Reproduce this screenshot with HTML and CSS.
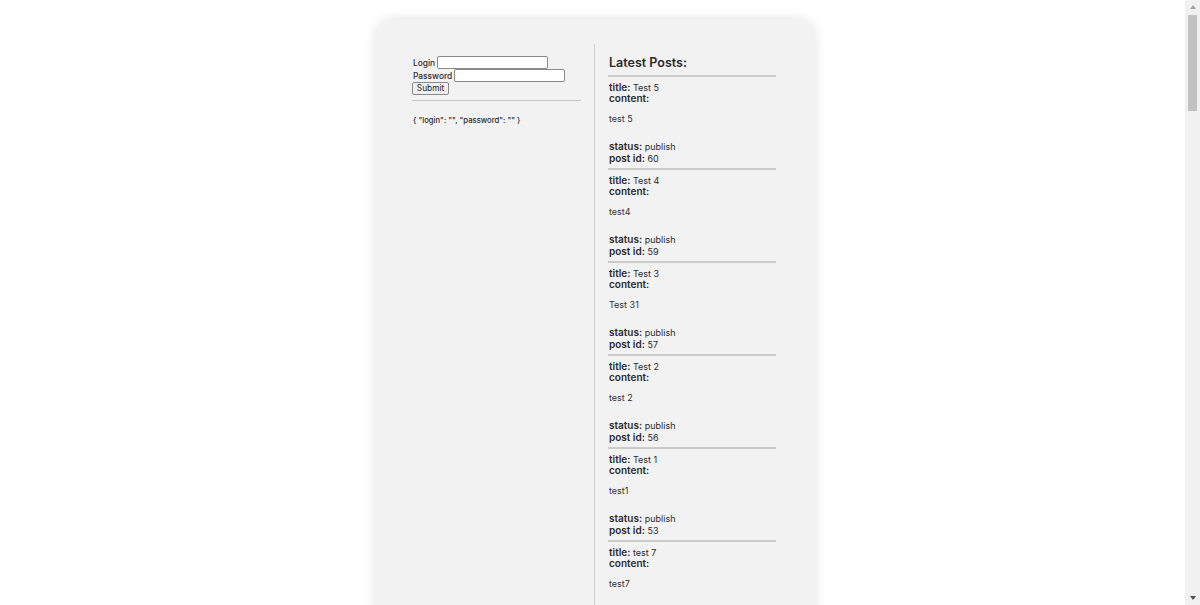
FILE: index.html
```html
<!DOCTYPE html>
<html lang="en">
<head>
    <meta charset="UTF-8">
    <meta name="viewport" content="width=device-width, initial-scale=1.0">
    <title>WP Posts</title>
    <link rel="stylesheet" href="styles.css">
</head>
<body>
    <div class="app-container">
        <div class="login-column">
            <form class="login-form">
                <div class="form-row">
                    <label for="login">Login</label>
                    <input type="text" id="login" name="login" class="login-input">
                </div>
                <div class="form-row">
                    <label for="password">Password</label>
                    <input type="password" id="password" name="password" class="login-input">
                </div>
                <button type="submit">Submit</button>
            </form>
            <hr class="divider">
            <p class="state-dump">{ "login": "", "password": "" }</p>
        </div>

        <div class="posts-column">
            <h2>Latest Posts:</h2>

            <div class="post">
                <div><b>title:</b> Test 5</div>
                <div><b>content:</b></div>
                <p class="post-content">test 5</p>
                <div><b>status:</b> publish</div>
                <div><b>post id:</b> 60</div>
            </div>
            <div class="post">
                <div><b>title:</b> Test 4</div>
                <div><b>content:</b></div>
                <p class="post-content">test4</p>
                <div><b>status:</b> publish</div>
                <div><b>post id:</b> 59</div>
            </div>
            <div class="post">
                <div><b>title:</b> Test 3</div>
                <div><b>content:</b></div>
                <p class="post-content">Test 31</p>
                <div><b>status:</b> publish</div>
                <div><b>post id:</b> 57</div>
            </div>
            <div class="post">
                <div><b>title:</b> Test 2</div>
                <div><b>content:</b></div>
                <p class="post-content">test 2</p>
                <div><b>status:</b> publish</div>
                <div><b>post id:</b> 56</div>
            </div>
            <div class="post">
                <div><b>title:</b> Test 1</div>
                <div><b>content:</b></div>
                <p class="post-content">test1</p>
                <div><b>status:</b> publish</div>
                <div><b>post id:</b> 53</div>
            </div>
            <div class="post">
                <div><b>title:</b> test 7</div>
                <div><b>content:</b></div>
                <p class="post-content">test7</p>
                <div><b>status:</b> publish</div>
                <div><b>post id:</b> 52</div>
            </div>
        </div>
    </div>

    <!-- window scrollbar, drawn over the page -->
    <div class="scrollbar">
        <span class="scroll-arrow up"></span>
        <span class="scroll-thumb"></span>
        <span class="scroll-arrow down"></span>
    </div>
</body>
</html>
```

FILE: styles.css
```css
body {
    font-family: 'Inter', 'Liberation Sans', sans-serif;
    background-color: #ffffff;
    color: #2a2a2a;
    margin: 0;
    padding-top: 19px;
    padding-right: 10px;
}

.app-container {
    width: 440px;
    margin: 0 auto;
    background-color: #f2f2f2;
    border-radius: 20px;
    box-shadow: 0 0 12px rgba(0, 0, 0, 0.12);
    padding: 25px 39px 40px 37px;
    box-sizing: border-box;
    display: grid;
    grid-template-columns: 182px 1fr;
}

/* left side - login form */
.login-column {
    padding: 12px 13px 0 0;
}

.login-form {
    font-size: 8.4px;
    font-weight: 500;
}

.form-row {
    display: flex;
    align-items: center;
    gap: 2px;
    height: 13px;
}

.form-row label {
    padding-left: 1px;
}

.login-input {
    width: 111px;
    height: 13px;
    padding: 0;
    border: 1px solid #8a8a8a;
    border-radius: 2px;
    background-color: #ffffff;
    box-sizing: border-box;
}

.login-form button[type="submit"] {
    margin-top: 0;
    width: 37px;
    height: 13px;
    padding: 0;
    font-family: 'Inter', 'Liberation Sans', sans-serif;
    font-size: 8.3px;
    color: #222;
    background-color: #efefef;
    border: 1px solid #8a8a8a;
    border-radius: 2px;
    line-height: 11px;
}

.divider {
    margin: 5px 0 0 0;
    border: none;
    border-top: 1px solid #c4c4c4;
}

.state-dump {
    margin: 15px 0 0 1px;
    font-size: 7.7px;
    font-weight: 500;
}

/* right side - posts */
.posts-column {
    border-left: 1px solid #cfcfcf;
    padding-left: 13px;
    padding-top: 12px;
    min-height: 560px;
}

.posts-column h2 {
    margin: 0;
    padding: 0 0 5px 1px;
    font-size: 12.5px;
    font-weight: 600;
    line-height: 14px;
    border-bottom: 2px solid #cbcbcb;
}

.post {
    font-size: 9px;
    line-height: 11.5px;
    padding: 4.5px 1px 4px 1px;
    border-bottom: 2px solid #cbcbcb;
}

.post b {
    font-size: 10px;
    font-weight: 600;
    line-height: 1;
}

.post-content {
    margin: 8.5px 0 16.5px 0;
    color: #333;
}

/* fake window scrollbar */
.scrollbar {
    position: fixed;
    top: 0;
    right: 0;
    bottom: 0;
    width: 15px;
    background-color: #f1f1f1;
    display: flex;
    flex-direction: column;
    align-items: center;
}

.scroll-arrow {
    width: 0;
    height: 0;
    border-left: 3.5px solid transparent;
    border-right: 3.5px solid transparent;
}

.scroll-arrow.up {
    margin-top: 5px;
    border-bottom: 4px solid #a3a3a3;
}

.scroll-arrow.down {
    margin-top: auto;
    margin-bottom: 5px;
    border-top: 4px solid #505050;
}

.scroll-thumb {
    margin-top: 6px;
    width: 9px;
    height: 96px;
    background-color: #c1c1c1;
}
```
